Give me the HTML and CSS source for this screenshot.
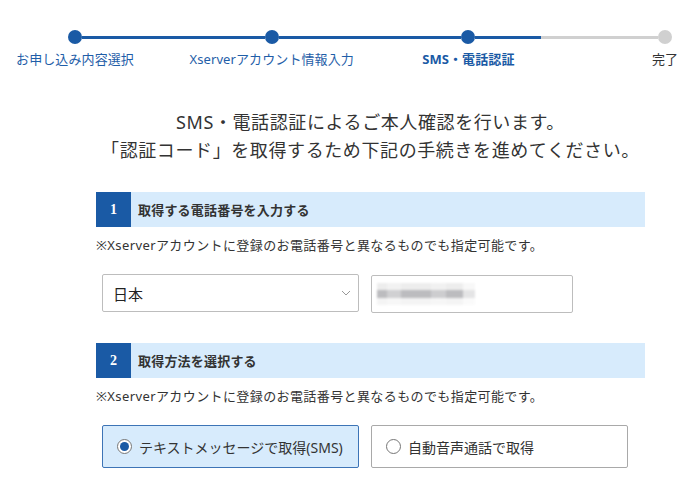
FILE: index.html
```html
<!DOCTYPE html>
<html lang="ja">
<head>
<meta charset="utf-8">
<title>SMS・電話認証</title>
<link rel="stylesheet" href="styles.css">
</head>
<body>
<div class="stepper">
  <div class="track">
    <span class="dot done"></span>
    <span class="seg done"></span>
    <span class="dot done"></span>
    <span class="seg done"></span>
    <span class="dot done"></span>
    <span class="seg half"></span>
    <span class="dot todo"></span>
  </div>
  <div class="labels">
    <span class="label">お申し込み内容選択</span>
    <span class="label">Xserverアカウント情報入力</span>
    <span class="label current">SMS・電話認証</span>
    <span class="label todo">完了</span>
  </div>
</div>

<main class="main">
  <h1 class="lead">SMS・電話認証によるご本人確認を行います。<br>「認証コード」を取得するため下記の手続きを進めてください。</h1>

  <section class="section">
    <div class="bar"><span class="num">1</span><span class="bar-title">取得する電話番号を入力する</span></div>
    <p class="note">※Xserverアカウントに登録のお電話番号と異なるものでも指定可能です。</p>
    <div class="fields">
      <div class="select">
        <span class="select-text">日本</span>
        <svg class="chev" width="10" height="6" viewBox="0 0 10 6"><polyline points="1,1 5,5 9,1" fill="none" stroke="#999" stroke-width="1"/></svg>
      </div>
      <div class="input"><span class="blur"></span></div>
    </div>
  </section>

  <section class="section second">
    <div class="bar"><span class="num">2</span><span class="bar-title">取得方法を選択する</span></div>
    <p class="note">※Xserverアカウントに登録のお電話番号と異なるものでも指定可能です。</p>
    <div class="fields">
      <label class="choice checked"><span class="radio"></span><span class="choice-text">テキストメッセージで取得(SMS)</span></label>
      <label class="choice"><span class="radio"></span><span class="choice-text">自動音声通話で取得</span></label>
    </div>
  </section>
</main>
</body>
</html>
```

FILE: styles.css
```css
html, body {
  margin: 0;
  padding: 0;
  background: #fff;
}
body {
  font-family: "Noto Sans", "Noto Sans CJK JP", sans-serif;
  color: #333;
  width: 700px;
  overflow: hidden;
}
.stepper {
  padding-top: 30px;
}
.track {
  display: flex;
  align-items: center;
  padding: 0 28px 0 68px;
  height: 14px;
}
.dot {
  width: 14px;
  height: 14px;
  border-radius: 50%;
  flex: none;
}
.dot.done { background: #1a5aa5; }
.dot.todo { background: #d0d0d0; }
.seg {
  flex: 1;
  height: 3px;
}
.seg.done { background: #1a5aa5; }
.seg.half { background: linear-gradient(to right, #1a5aa5 0 66px, #d0d0d0 66px); }
.labels {
  display: grid;
  grid-template-columns: repeat(4, 14px);
  justify-content: space-between;
  padding: 0 28px 0 68px;
  margin-top: 6px;
}
.label {
  display: flex;
  justify-content: center;
  white-space: nowrap;
  font-size: 13px;
  line-height: 18px;
  color: #1f5ea8;
  letter-spacing: 0.1px;
}
.label.current { font-weight: bold; color: #1a5aa5; }
.label.todo { color: #333; }

.main {
  margin-left: 96px;
  width: 549px;
}
.lead {
  margin: 40px 0 0;
  text-align: center;
  font-weight: normal;
  font-size: 18px;
  letter-spacing: 0.6px;
  line-height: 28px;
  color: #333;
}
.section {
  margin-top: 28px;
}
.section.second {
  margin-top: 30px;
}
.bar {
  display: flex;
  align-items: center;
  height: 35px;
  background: #d7ebfc;
}
.num {
  width: 35px;
  height: 35px;
  background: #1a5aa5;
  color: #fff;
  font-family: "Liberation Serif", serif;
  font-weight: bold;
  font-size: 14px;
  display: flex;
  align-items: center;
  justify-content: center;
}
.bar-title {
  margin-left: 7px;
  font-size: 13px;
  font-weight: bold;
  color: #333;
  letter-spacing: 0.2px;
}
.note {
  margin: 9px 0 0;
  font-size: 13px;
  line-height: 18px;
  color: #333;
  letter-spacing: 0.4px;
}
.fields {
  display: flex;
  gap: 12px;
  margin-top: 20px;
  padding-left: 6px;
}
.select {
  box-sizing: border-box;
  width: 257px;
  height: 38px;
  border: 1px solid #bdbdbd;
  border-radius: 2px;
  display: flex;
  align-items: center;
  justify-content: space-between;
  padding: 0 7px 0 10px;
}
.select-text {
  font-size: 15px;
  color: #222;
}
.chev { display: block; }
.input {
  box-sizing: border-box;
  width: 202px;
  height: 38px;
  margin-top: 1px;
  border: 1px solid #bdbdbd;
  border-radius: 2px;
  display: flex;
  align-items: center;
  padding-left: 5px;
}
.blur {
  width: 98px;
  height: 22px;
  background:
    linear-gradient(to right, rgba(255,255,255,0) 0 10%, rgba(255,255,255,0.3) 10% 25%, rgba(255,255,255,0) 25% 55%, rgba(255,255,255,0.25) 55% 70%, rgba(255,255,255,0) 70% 88%, rgba(255,255,255,0.6) 88%),
    linear-gradient(to bottom, #ededed 0 30%, #bcbcbf 30% 68%, #f4f4f4 68%);
  filter: blur(1px);
}
.choice {
  box-sizing: border-box;
  width: 257px;
  height: 43px;
  border: 1px solid #a9a9a9;
  border-radius: 2px;
  display: flex;
  align-items: center;
  padding-left: 14px;
  background: #fff;
}
.choice.checked {
  background: #d7ebfc;
  border-color: #3d74b6;
}
.radio {
  box-sizing: border-box;
  width: 15px;
  height: 15px;
  border: 1px solid #767676;
  border-radius: 50%;
  background: #fff;
  flex: none;
  display: flex;
  align-items: center;
  justify-content: center;
}
.choice.checked .radio::after {
  content: "";
  width: 9px;
  height: 9px;
  border-radius: 50%;
  background: #1a5aa5;
}
.choice-text {
  margin-left: 7px;
  font-size: 14px;
  color: #333;
}
```
